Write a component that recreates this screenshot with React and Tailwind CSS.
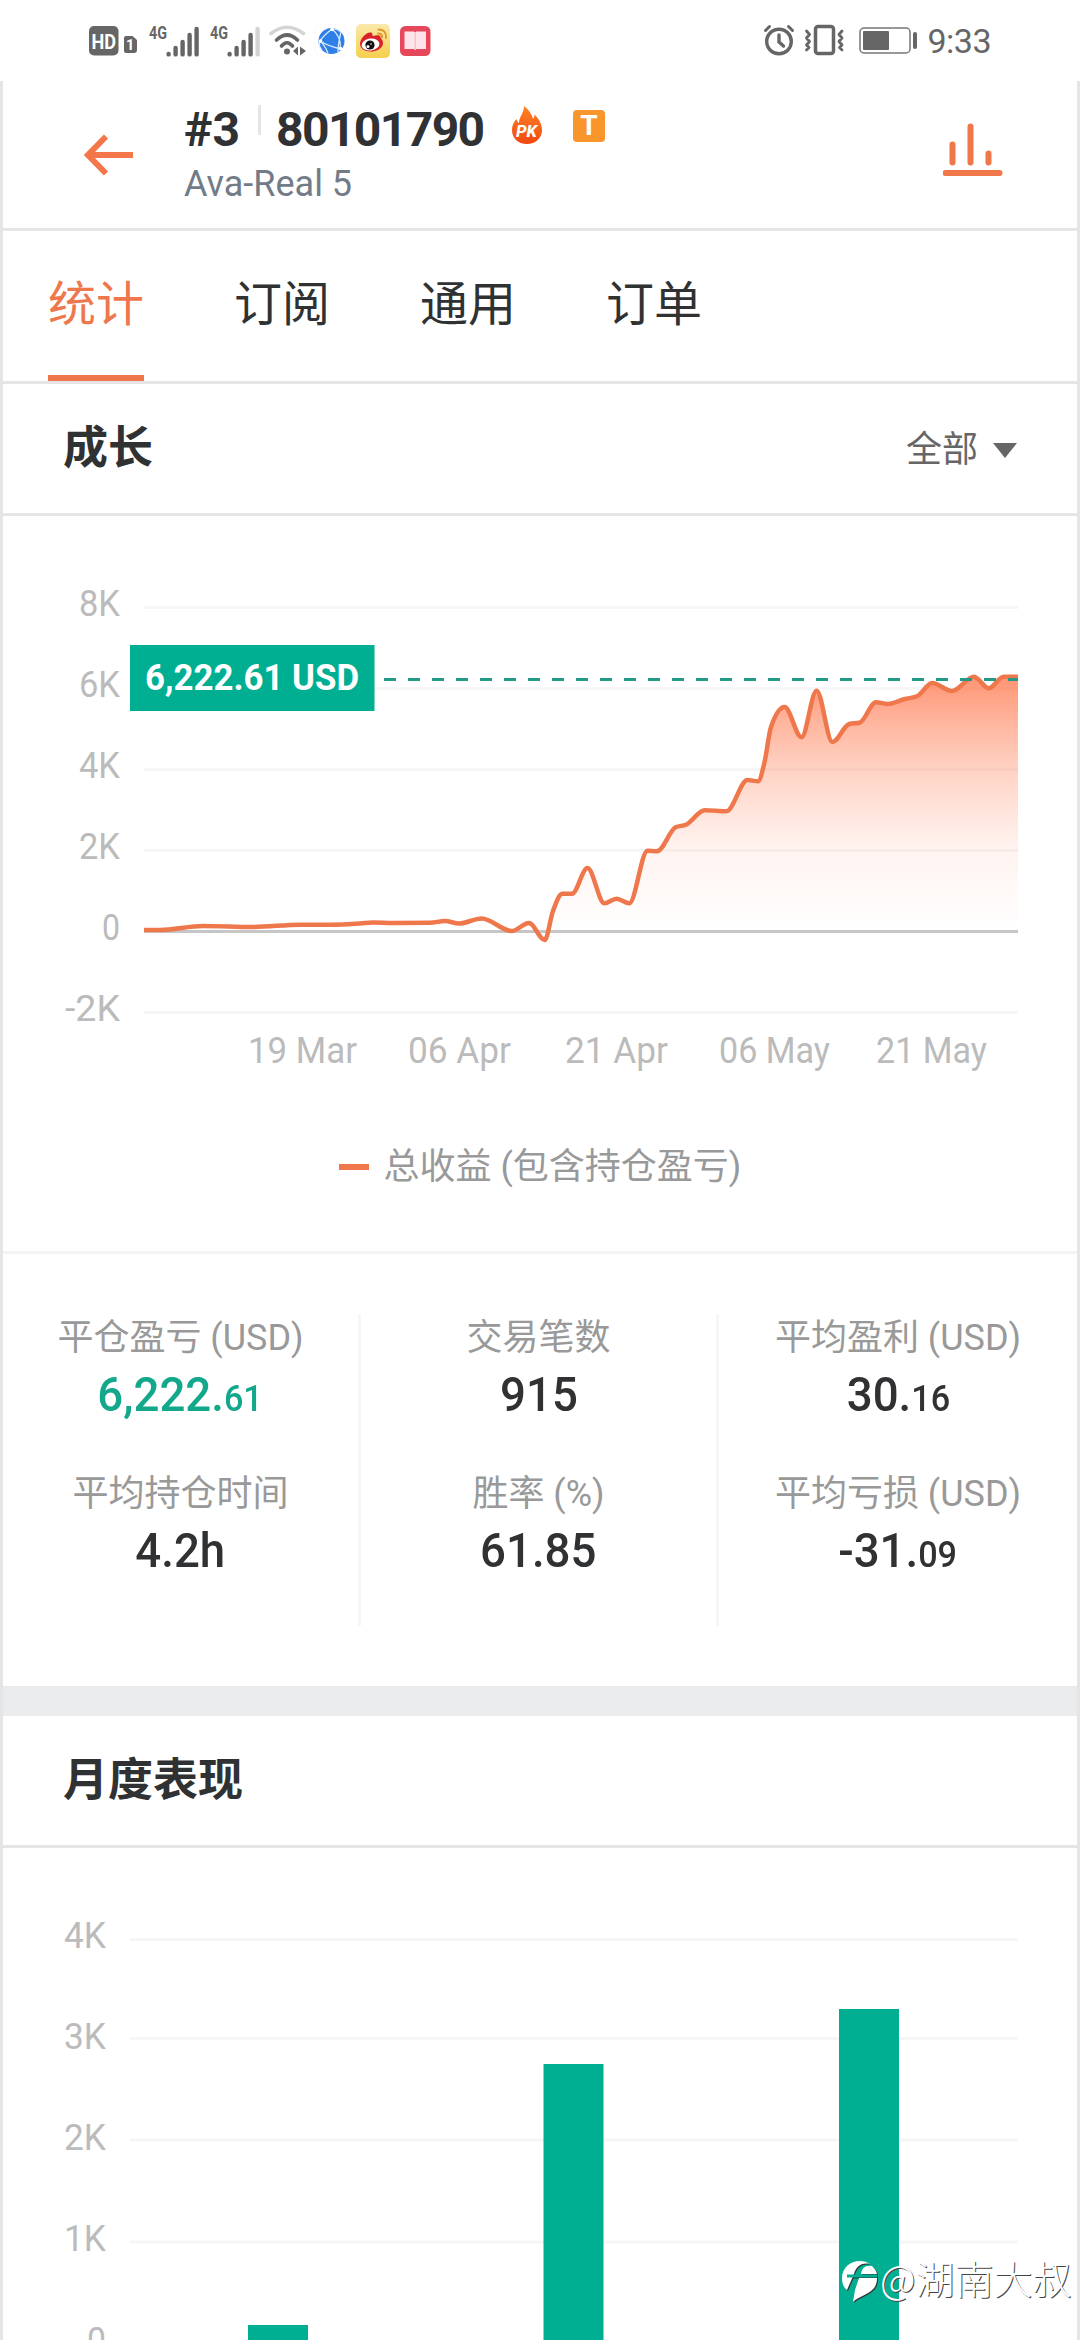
import React from 'react';

const growthPoints = [
  [144, 930], [160, 930], [203, 926], [253, 927], [300, 924.7], [330, 924.7], [360, 923.5], [373, 922.5],
  [393, 923], [430, 922.7], [445, 921], [459, 923.5], [481.7, 918.5], [511.7, 931], [529, 923], [544.7, 940],
  [553, 911], [562.3, 893.7], [572, 893.7], [587.5, 868], [604.4, 903.3], [616.6, 898.7], [629.3, 903.3],
  [647.5, 850.7], [657, 851.3], [675.6, 827.3], [686, 824.7], [704.7, 810.3], [726.4, 811.3],
  [747.5, 780], [758, 781.3], [764.3, 763.3], [771, 727], [784.6, 707], [801.5, 737.3],
  [816.6, 690.7], [832.4, 742], [849.2, 724], [859.7, 722.7], [876, 702.3], [887.8, 704], [905, 699],
  [917.6, 696], [932, 683], [952, 691], [974, 676.7], [988.8, 688.3], [1003.5, 676.7], [1018, 676.7],
];

// Monotone cubic interpolation, so the line never overshoots a peak
const smoothPath = (pts) => {
  const n = pts.length;
  const slopes = [];
  for (let i = 0; i < n - 1; i++) {
    slopes.push((pts[i + 1][1] - pts[i][1]) / (pts[i + 1][0] - pts[i][0]));
  }
  const tangents = pts.map((_, i) => {
    if (i === 0) return slopes[0];
    if (i === n - 1) return slopes[n - 2];
    const a = slopes[i - 1];
    const b = slopes[i];
    const h0 = pts[i][0] - pts[i - 1][0];
    const h1 = pts[i + 1][0] - pts[i][0];
    const p = (a * h1 + b * h0) / (h0 + h1);
    return (Math.sign(a) + Math.sign(b)) * Math.min(Math.abs(a), Math.abs(b), Math.abs(p) / 2);
  });
  let d = `M${pts[0][0]},${pts[0][1]}`;
  for (let i = 0; i < n - 1; i++) {
    const h = (pts[i + 1][0] - pts[i][0]) / 3;
    d += `C${pts[i][0] + h},${pts[i][1] + tangents[i] * h} ${pts[i + 1][0] - h},${pts[i + 1][1] - tangents[i + 1] * h} ${pts[i + 1][0]},${pts[i + 1][1]}`;
  }
  return d;
};

const growthLine = smoothPath(growthPoints);

const growthAxis = [
  { label: '8K', y: 607, x: 79, w: 41 },
  { label: '6K', y: 688, x: 79, w: 41 },
  { label: '4K', y: 769, x: 79, w: 41 },
  { label: '2K', y: 850, x: 79, w: 41 },
  { label: '0', y: 931, x: 102, w: 18 },
  { label: '-2K', y: 1012, x: 65, w: 55 },
];

const growthDates = [
  { label: '19 Mar', x: 248, w: 109 },
  { label: '06 Apr', x: 408, w: 103 },
  { label: '21 Apr', x: 565, w: 103 },
  { label: '06 May', x: 719, w: 111 },
  { label: '21 May', x: 876, w: 111 },
];

const monthAxis = [
  { label: '4K', y: 1939.5, base: 1948 },
  { label: '3K', y: 2038.5, base: 2049 },
  { label: '2K', y: 2140, base: 2150 },
  { label: '1K', y: 2242, base: 2251 },
];

const monthBars = [
  { x: 248, y: 2325 },
  { x: 543.5, y: 2064 },
  { x: 839, y: 2009 },
];

const stats = [
  { label: '平仓盈亏 (USD)', value: '6,222.', small: '61', green: true },
  { label: '交易笔数', value: '915' },
  { label: '平均盈利 (USD)', value: '30.', small: '16' },
  { label: '平均持仓时间', value: '4.2h' },
  { label: '胜率 (%)', value: '61.85' },
  { label: '平均亏损 (USD)', value: '-31.', small: '09' },
];

const Signal = ({ weak }) => (
  <svg className="overflow-visible" width="54" height="34" viewBox="0 0 54 34" fill="none" strokeLinecap="round" strokeWidth="4.4" stroke="#666">
    <text x="0" y="14.500" fontSize="18" fontWeight="700" fill="#666" stroke="none" textLength="18" lengthAdjust="spacingAndGlyphs">4G</text>
    <path d="M19.6 30v.4M26.6 24v6.4M33.6 18v12.4M40.6 11v19.4" />
    <path d="M47.6 5v25.4" stroke={weak ? '#d4d4d4' : '#666'} />
  </svg>
);

const StatusBar = () => (
  <div className="flex h-[81px] items-start justify-between pt-6 pr-[89px] pl-[89px] text-[#666]">
    <div className="flex items-start">
      <svg width="49" height="34" viewBox="0 0 49 34">
        <rect x="0" y="2" width="29.500" height="29.500" rx="5" fill="#666" />
        <text x="2.500" y="24.500" fontSize="20" fontWeight="700" fill="#fff" textLength="24.500" lengthAdjust="spacingAndGlyphs">HD</text>
        <path d="M37 12h6.500l4.500 4v10a3 3 0 0 1-3 3h-8a2 2 0 0 1-2-2v-13a2 2 0 0 1 2-2z" fill="#666" />
        <text x="37" y="26" fontSize="14.500" fontWeight="700" fill="#fff">1</text>
      </svg>
      <div className="ml-[11px]"><Signal /></div>
      <div className="ml-[7px]"><Signal weak /></div>
      <svg className="ml-[5px]" width="38" height="34" viewBox="0 0 38 34" fill="none" stroke="#666" strokeWidth="3.600" strokeLinecap="round">
        <path d="M2 9.500Q18 -3 34.500 9.500" stroke="#d4d4d4" />
        <path d="M7.500 16Q18 6 28.500 16" />
        <path d="M12.500 22Q18 15.500 23.500 22" />
        <circle cx="18" cy="27.500" r="3" fill="#666" stroke="none" />
        <path d="M24 27l5-4.500v9zM31 22.500v9l6-4.500z" fill="#666" stroke="none" />
      </svg>
      <svg className="ml-[7px]" width="34" height="34" viewBox="0 0 34 34">
        <rect x="1" y="0" width="32" height="33" rx="7" fill="#fff" stroke="#fdf8f6" />
        <circle cx="17.500" cy="17" r="13" fill="#2f7fe6" />
        <g fill="none" stroke="#d9ebff" strokeWidth="1.300">
          <path d="M18 5Q9 12 6 17Q14 22 27 25M18 5Q27 12 26.500 24.500M6 17Q4 22 8 26M6 17Q10 20 14 29M18 5Q23 4 27 8M27 8Q24 20 24 28" />
        </g>
        <g fill="#fff"><circle cx="18" cy="5.500" r="1.800" /><circle cx="6.500" cy="17" r="1.800" /><circle cx="26.500" cy="24.500" r="1.800" /></g>
      </svg>
      <svg className="ml-[8px]" width="34" height="34" viewBox="0 0 34 34">
        <defs>
          <linearGradient id="weiboBg" x1="0" y1="0" x2="0" y2="1">
            <stop offset="0" stopColor="#fbe9ac" />
            <stop offset="1" stopColor="#f6cf4c" />
          </linearGradient>
        </defs>
        <rect width="34" height="34" rx="5" fill="url(#weiboBg)" />
        <path d="M4 20C4 14 11 7.500 15 8.500C17 9 16 12 17 12C20 11 24 10.500 24.500 13C24.500 15 27.500 16 27 20C26 25 20 27.500 14.500 27.500C8.500 27.500 4 24.500 4 20z" fill="#d8232a" />
        <ellipse cx="14.500" cy="20.500" rx="9" ry="6" fill="#fff" transform="rotate(-8 14.500 20.500)" />
        <circle cx="14" cy="21" r="4.600" fill="#111" />
        <circle cx="12" cy="22.500" r="1.500" fill="#fff" />
        <circle cx="15" cy="20" r=".8" fill="#fff" />
        <path d="M22.500 5.500q8 0 7.500 8.500M22 9.500q4.500 0 4 4" fill="none" stroke="#e0972c" strokeWidth="1.900" strokeLinecap="round" />
      </svg>
      <svg className="ml-[10px]" width="31" height="34" viewBox="0 0 31 34">
        <rect x="0" y="2" width="30.500" height="30" rx="5.500" fill="#e6475a" />
        <path d="M4.500 7.500h9.500l1.300 1 1.200-1h9.500v17.500h-9.500l-1.200 1.200-1.300-1.200h-9.500z" fill="#ffe3ea" />
        <path d="M15.300 8.500v17" stroke="#f7b4c2" strokeWidth="1" />
      </svg>
    </div>
    <div className="flex items-start">
      <svg width="32" height="34" viewBox="0 0 32 34" fill="none" stroke="#666" strokeWidth="3.400" strokeLinecap="round">
        <circle cx="16" cy="17.500" r="12.300" />
        <path d="M16 11v7l4.500 4" />
        <path d="M2.500 6.500l4-4M29.500 6.500l-4-4" strokeWidth="3" />
      </svg>
      <svg className="ml-[9px]" width="41" height="34" viewBox="0 0 41 34" fill="none" stroke="#666" strokeWidth="3.500" strokeLinejoin="round" strokeLinecap="round">
        <rect x="11.500" y="2.500" width="18" height="27" rx="2.500" />
        <path d="M2.500 7l3 3.500-3 3.500 3 3.500-3 3.500 2.500 2.500-2.500 2.500M38 7l-3 3.500 3 3.500-3 3.500 3 3.500-2.500 2.500 2.500 2.500" strokeWidth="2.800" />
      </svg>
      <svg className="ml-[14px]" width="59" height="34" viewBox="0 0 59 34">
        <rect x="1" y="4" width="50" height="25" rx="4" fill="none" stroke="#777" strokeWidth="1.500" />
        <rect x="4" y="7" width="26" height="19" rx="1" fill="#666" />
        <rect x="54" y="8" width="4" height="17" rx="2" fill="#666" />
      </svg>
      <span className="ml-[9px] text-[34px] leading-[34px] tracking-[-0.5px]">9:33</span>
    </div>
  </div>
);

const Header = () => (
  <header className="flex h-[150px] items-start border-b-3 border-[#e5e5e5] pr-[74px] pl-[81px]">
    <svg className="mt-[53px]" width="50" height="42" viewBox="0 0 50 42" fill="none" stroke="#f4774b" strokeWidth="6">
      <path d="M22 2.500L4 21L22 39.500M4 21H49" />
    </svg>
    <div className="ml-[50px] flex-1">
      <div className="flex h-[72px] items-start">
        <span className="mt-[21px] w-[58px] text-[48px] leading-[56px] font-bold text-[#303133]">#3</span>
        <i className="mt-[24px] ml-[16px] h-[30px] w-[3px] bg-[#e5e5e5]" />
        <span className="mt-[21px] ml-[15px] w-[210px] text-[48px] leading-[56px] font-bold tracking-[-1.600px] text-[#303133]">80101790</span>
        <svg className="mt-[24px] ml-[25px]" width="32" height="40" viewBox="0 0 32 40">
          <defs>
            <linearGradient id="flame" x1="0" y1="0" x2="0" y2="1">
              <stop offset="0" stopColor="#ff8427" />
              <stop offset="1" stopColor="#f0480f" />
            </linearGradient>
          </defs>
          <path d="M13 1C18 5 21 9 22 14C23 13 23.500 11 23.500 9.500C28 14 31 19 31 25C31 33 24.500 39 16 39C7 39 1 33 1 25C1 20 3 17 5.500 14C6 16 7 17.500 8 18C8 12 13 8 13 1z" fill="url(#flame)" />
          <text x="5" y="31.500" fontSize="16.500" fontWeight="800" fontStyle="italic" fill="#fff" textLength="21" lengthAdjust="spacingAndGlyphs">PK</text>
        </svg>
        <span className="mt-[29px] ml-[30px] flex h-[32px] w-[32px] items-center justify-center rounded-[4px] bg-[#f8962c] text-[28px] font-bold text-white">T</span>
      </div>
      <div className="mt-[9px] text-[36px] leading-[44px] text-[#727b88]">Ava-Real 5</div>
    </div>
    <svg className="mt-[41px]" width="60" height="55" viewBox="0 0 60 55" stroke="#f0774a" strokeWidth="6" strokeLinecap="round">
      <path d="M9.500 22.500v18M27.500 4.500v36M45.500 31.500v9M2.500 51h54" />
    </svg>
  </header>
);

const Tabs = () => (
  <nav className="flex h-[153px] gap-[90px] border-b-3 border-[#e5e5e5] pl-[45px] text-[48px] text-[#303133]">
    <span className="h-full border-b-6 border-[#ee774c] leading-[148px] text-[#ee774c]">统计</span>
    <span className="leading-[148px]">订阅</span>
    <span className="leading-[148px]">通用</span>
    <span className="leading-[148px]">订单</span>
  </nav>
);

const SectionTitle = ({ title, children }) => (
  <div className="flex h-[132px] items-center justify-between border-b-3 border-[#e5e5e5] pr-[60px] pl-[60px]">
    <h2 className="text-[45px] leading-[60px] font-bold text-[#303133]">{title}</h2>
    {children}
  </div>
);

const GrowthChart = () => (
  <svg className="block" width="1074" height="600" viewBox="3 516 1074 600">
    <defs>
      <linearGradient id="area" x1="0" y1="676" x2="0" y2="931" gradientUnits="userSpaceOnUse">
        <stop offset="0" stopColor="#ff7043" stopOpacity=".75" />
        <stop offset=".18" stopColor="#ff7043" stopOpacity=".52" />
        <stop offset=".36" stopColor="#ff7043" stopOpacity=".32" />
        <stop offset=".68" stopColor="#ff7043" stopOpacity=".08" />
        <stop offset="1" stopColor="#ff7043" stopOpacity="0" />
      </linearGradient>
    </defs>
    {growthAxis.map((row) => (
      <g key={row.label}>
        <path d={`M144 ${row.y + 0.5}H1018`} stroke={row.label === '0' ? '#c6c6c6' : '#f6f6f6'} strokeWidth="3" />
        <text x={row.x} y={row.y + 9} fontSize="36" fill="#bbb" textLength={row.w} lengthAdjust="spacingAndGlyphs">{row.label}</text>
      </g>
    ))}
    <path d={`${growthLine}V931H144Z`} fill="url(#area)" />
    <path d={growthLine} fill="none" stroke="#ef774c" strokeWidth="4.500" strokeLinejoin="round" />
    <path d="M384 679.500H1018" stroke="#249985" strokeWidth="3" strokeDasharray="12 12" />
    <rect x="130" y="645" width="244.500" height="66" fill="#00af92" />
    <text x="145" y="690" fontSize="36" fontWeight="700" fill="#fff" textLength="214" lengthAdjust="spacingAndGlyphs">6,222.61 USD</text>
    {growthDates.map((d) => (
      <text key={d.label} x={d.x} y="1063" fontSize="36" fill="#bbb" textLength={d.w} lengthAdjust="spacingAndGlyphs">{d.label}</text>
    ))}
  </svg>
);

const MonthlyChart = () => (
  <svg className="block" width="1074" height="492" viewBox="3 1848 1074 492">
    {monthAxis.map((row) => (
      <g key={row.label}>
        <path d={`M130 ${row.y}H1018`} stroke="#f6f6f6" strokeWidth="3" />
        <text x="64" y={row.base} fontSize="36" fill="#bbb" textLength="42" lengthAdjust="spacingAndGlyphs">{row.label}</text>
      </g>
    ))}
    <text x="87" y="2353" fontSize="36" fill="#bbb" textLength="19" lengthAdjust="spacingAndGlyphs">0</text>
    {monthBars.map((bar) => (
      <rect key={bar.x} x={bar.x} y={bar.y} width="60" height={2344 - bar.y} fill="#00af92" />
    ))}
  </svg>
);

const Stat = ({ item, last }) => (
  <div className={`flex h-[156px] flex-col items-center ${last ? '' : 'border-r-3 border-[#f6f6f6]'}`}>
    <span className="text-[36px] leading-[48px] whitespace-nowrap text-[#999]">{item.label}</span>
    <span className={`mt-px scale-x-[0.95] text-[48px] leading-[64px] font-medium ${item.green ? 'text-[#13a78c]' : 'text-[#303133]'}`}>
      {item.value}
      {item.small && <span className="text-[36px]">{item.small}</span>}
    </span>
  </div>
);

const Watermark = () => (
  <div className="absolute top-[2255px] left-[841px] flex items-start">
    <svg width="38" height="50" viewBox="0 0 38 50" className="drop-shadow-[1px_1px_0px_#333]">
      <path d="M19 6C9 6 1 13 1 23C1 29 3 33 6 35L13 19C15 12 20 7 29 9C26 7 23 6 19 6z" fill="#fff" />
      <path d="M31 11C24 10 21 13 20 19H36C35 15 33 13 31 11zM36 23H18L14 35L12 47C17 42 25 40 30 36C34 33 36 29 36 23z" fill="#fff" />
      <path d="M6 21H36" stroke="#00af92" strokeWidth="3" />
    </svg>
    <span className="-mt-px ml-px font-['Noto_Sans_CJK_SC',sans-serif] text-[39px] leading-[46px] font-light whitespace-nowrap text-white [text-shadow:1px_1px_0px_#444]">@湖南大叔</span>
  </div>
);

export default function App() {
  return (
    <div className="relative h-[2340px] w-[1080px] overflow-hidden bg-white font-['Roboto','Noto_Sans_CJK_SC',sans-serif]">
      <StatusBar />
      <main className="border-x-3 border-[#e5e5e5]">
        <Header />
        <Tabs />
        <SectionTitle title="成长">
          <div className="mt-[3px] flex items-center gap-[15px] text-[36px] text-[#666]">
            全部
            <svg width="24" height="15" viewBox="0 0 24 15" fill="#666"><path d="M0 0h24L12 15z" /></svg>
          </div>
        </SectionTitle>
        <GrowthChart />
        <div className="flex h-[138px] items-start justify-center border-b-3 border-[#f4f4f4] pt-[24px]">
          <i className="mt-[24px] mr-[15px] h-[6px] w-[30px] bg-[#f0774c]" />
          <span className="text-[36px] leading-[54px] text-[#999]">总收益 (包含持仓盈亏)</span>
        </div>
        <div className="grid grid-cols-3 pt-[60px] pb-[60px]">
          {stats.map((item, i) => (
            <Stat key={item.label} item={item} last={i % 3 === 2} />
          ))}
        </div>
        <div className="h-[30px] bg-[#eaebec]" />
        <SectionTitle title="月度表现" />
        <MonthlyChart />
      </main>
      <Watermark />
    </div>
  );
}
